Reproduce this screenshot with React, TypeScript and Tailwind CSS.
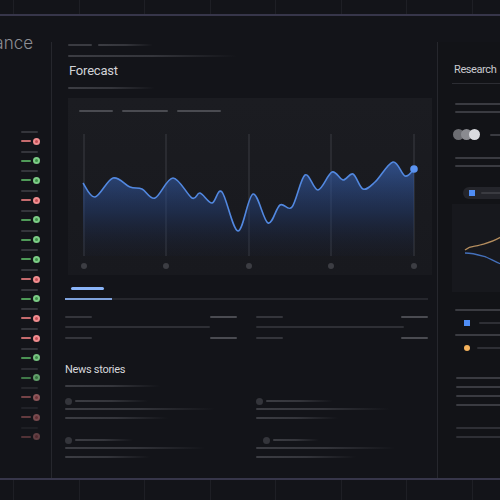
import React from 'react';

const pts: [number, number][] = [
  [83, 183], [95, 197], [113, 178], [130, 187], [142, 189], [155, 198], [173, 178],
  [192, 198], [200, 193], [212, 203], [222, 192], [238, 231], [253, 194], [268, 223],
  [280, 205], [292, 207], [305, 175], [318, 190], [332, 172], [343, 180], [353, 174],
  [363, 189], [375, 182], [393, 162], [405, 176], [414, 169],
];

// catmull-rom -> cubic bezier
function smooth(p: [number, number][]) {
  let d = `M${p[0][0]},${p[0][1]}`;
  for (let i = 0; i < p.length - 1; i++) {
    const p0 = p[i - 1] || p[i];
    const p1 = p[i];
    const p2 = p[i + 1];
    const p3 = p[i + 2] || p2;
    const c1x = p1[0] + (p2[0] - p0[0]) / 6;
    const c1y = p1[1] + (p2[1] - p0[1]) / 6;
    const c2x = p2[0] - (p3[0] - p1[0]) / 6;
    const c2y = p2[1] - (p3[1] - p1[1]) / 6;
    d += ` C${c1x},${c1y} ${c2x},${c2y} ${p2[0]},${p2[1]}`;
  }
  return d;
}

const line = smooth(pts);
const area = `${line} L414,256 L83,256 Z`;

const rows = [
  'r', 'g', 'g', 'r', 'g', 'g', 'g', 'r', 'g', 'r', 'r', 'g', 'g', 'r', 'r', 'r',
];
const fades = [1, 1, 1, 1, 1, 1, 1, 1, 1, 1, 1, 0.95, 0.75, 0.55, 0.45, 0.35];

function Bar({ w, c = 'bg-[#3a3b41]', cls = '' }: { w: number; c?: string; cls?: string }) {
  return <div className={`h-[2px] rounded-full ${c} ${cls}`} style={{ width: w }} />;
}

function Fade({ w, cls = '' }: { w: number; cls?: string }) {
  return (
    <div
      className={`h-[2px] rounded-full bg-gradient-to-r from-[#3c3d43] via-[#34353b] to-transparent ${cls}`}
      style={{ width: w }}
    />
  );
}

function Strip() {
  return (
    <div className="flex h-full pl-[13px]">
      {[0, 1, 2, 3, 4, 5, 6, 7].map((i) => (
        <div key={i} className="h-full w-[65.5px] shrink-0 border-l border-[#1e1f25]" />
      ))}
    </div>
  );
}

function Story({ dotMl = 0, head, l1, l2 }: { dotMl?: number; head: number; l1: number; l2: number }) {
  return (
    <div className="flex flex-col">
      <div className="flex h-[8px] items-center gap-[3px]" style={{ marginLeft: dotMl }}>
        <div className="h-[7px] w-[7px] rounded-full bg-[#34353b]" />
        <Fade w={head} />
      </div>
      <Fade w={l1} cls="mt-[3px]" />
      <Fade w={l2} cls="mt-[7px]" />
    </div>
  );
}

export default function App() {
  return (
    <div className="h-[500px] w-[500px] overflow-hidden bg-[#131419] font-['Roboto','Liberation_Sans',sans-serif]">
      <div className="h-[14px]">
        <Strip />
      </div>
      <div className="h-[2px] bg-[#37364a]" />

      <div className="flex h-[462px]">
        {/* left column */}
        <div className="flex w-[51px] shrink-0 flex-col overflow-hidden">
          <div className="mt-[17px] flex justify-end pr-[18px]">
            <span className="whitespace-nowrap font-['Inter',sans-serif] text-[17px] font-light leading-[20px] text-[#8d8e94]">
              Performance
            </span>
          </div>
          <div className="mt-[76px] flex flex-col">
            {rows.map((r, i) => (
              <div key={i} className="h-[19.73px] pl-[21px] pt-[2px]" style={{ opacity: fades[i] }}>
                <Bar w={17} c="bg-[#34353b]" />
                <div className="mt-[4.5px] flex items-center gap-[1.5px]">
                  <div className={`h-[2px] w-[10px] rounded-full ${r === 'r' ? 'bg-[#c56b6e]' : 'bg-[#4f9a58]'}`} />
                  <div
                    className={`flex h-[7px] w-[7px] items-center justify-center rounded-full ${
                      r === 'r' ? 'bg-[#f08d8f]' : 'bg-[#7ccc86]'
                    }`}
                  >
                    <div className={`h-[3px] w-[3px] rounded-full ${r === 'r' ? 'bg-[#c24e56]' : 'bg-[#3f8f4a]'}`} />
                  </div>
                </div>
              </div>
            ))}
          </div>
        </div>

        {/* middle column */}
        <div className="mt-[26px] flex w-[387px] shrink-0 flex-col border-l border-r border-[#26272d]">
          <div className="ml-[16px] mt-[2px] flex gap-[6px]">
            <Bar w={24} />
            <Fade w={55} />
          </div>
          <Fade w={169} cls="ml-[16px] mt-[9px]" />
          <div className="ml-[17px] mt-[6px] text-[13px] leading-[16px] tracking-[-0.2px] text-[#d2d3d7]">Forecast</div>
          <Fade w={87} cls="ml-[16px] mt-[8px]" />

          <div className="ml-[16px] mt-[9px] h-[177px] w-[364px] bg-gradient-to-b from-[#1b1c21] to-[#18191e]">
            <div className="flex h-[22px] gap-[9px] pl-[11px] pt-[12px]">
              <Bar w={34} c="bg-[#4a4b51]" />
              <Bar w={46} c="bg-[#4a4b51]" />
              <Bar w={44} c="bg-[#4a4b51]" />
            </div>
            <svg width="364" height="155" viewBox="68 120 364 155" className="block">
              <defs>
                <linearGradient id="fill" x1="0" y1="160" x2="0" y2="256" gradientUnits="userSpaceOnUse">
                  <stop offset="0" stopColor="#3d6cc2" stopOpacity="0.65" />
                  <stop offset="0.55" stopColor="#24407a" stopOpacity="0.45" />
                  <stop offset="1" stopColor="#1b2540" stopOpacity="0.1" />
                </linearGradient>
              </defs>
              {[84, 166, 249, 331, 414].map((x) => (
                <g key={x}>
                  <line x1={x} y1={134} x2={x} y2={256} stroke="#3b3c43" strokeWidth="1" />
                  <circle cx={x} cy={266} r="3" fill="#3c3d43" />
                </g>
              ))}
              <path d={area} fill="url(#fill)" />
              <path d={line} fill="none" stroke="#5288e0" strokeWidth="1.6" />
              <circle cx={414} cy={169} r="3.8" fill="#5b93f0" />
            </svg>
          </div>

          <div className="ml-[19px] mt-[12px] h-[3px] w-[33px] rounded-full bg-[#8ab4f8]" />
          <div className="ml-[13px] mt-[8px] flex h-[2px] w-[363px] bg-[#26272d]">
            <div className="h-[2px] w-[47px] bg-[#7fa2dc]" />
          </div>

          <div className="ml-[13px] mt-[16px] flex w-[363px] justify-between">
            <div className="flex w-[172px] flex-col">
              <div className="flex justify-between">
                <Bar w={27} c="bg-[#34353b]" />
                <Bar w={27} c="bg-[#4a4b51]" />
              </div>
              <Bar w={145} c="bg-[#2e2f35]" cls="mt-[8px]" />
              <div className="mt-[9px] flex justify-between">
                <Bar w={27} c="bg-[#34353b]" />
                <Bar w={27} c="bg-[#4a4b51]" />
              </div>
            </div>
            <div className="flex w-[172px] flex-col">
              <div className="flex justify-between">
                <Bar w={27} c="bg-[#34353b]" />
                <Bar w={27} c="bg-[#4a4b51]" />
              </div>
              <Bar w={148} c="bg-[#2e2f35]" cls="mt-[8px]" />
              <div className="mt-[9px] flex justify-between">
                <Bar w={27} c="bg-[#34353b]" />
                <Bar w={27} c="bg-[#4a4b51]" />
              </div>
            </div>
          </div>

          <div className="ml-[13px] mt-[24px] text-[11px] leading-[14px] tracking-[-0.3px] text-[#d6d7db]">News stories</div>
          <Fade w={95} cls="ml-[13px] mt-[8px]" />

          <div className="ml-[13px] mt-[10px] grid w-[363px] grid-cols-2 gap-x-[19px] gap-y-[17px]">
            <Story head={73} l1={150} l2={103} />
            <Story head={67} l1={134} l2={82} />
            <Story head={58} l1={140} l2={85} />
            <Story dotMl={7} head={46} l1={139} l2={100} />
          </div>
        </div>

        {/* right column */}
        <div className="mt-[26px] flex flex-1 flex-col bg-[#121317]">
          <div className="ml-[16px] mt-[21px] whitespace-nowrap text-[11px] leading-[14px] tracking-[-0.4px] text-[#c9cacf]">
            Research
          </div>
          <div className="ml-[14px] mt-[6px] h-px bg-[#2c2d33]" />
          <Bar w={60} cls="ml-[17px] mt-[19px]" />
          <Bar w={60} cls="ml-[17px] mt-[6px]" />
          <div className="ml-[15px] mt-[16px] flex items-center">
            <div className="h-[11px] w-[11px] rounded-full bg-[#6c6d72]" />
            <div className="-ml-[3px] h-[11px] w-[11px] rounded-full bg-[#8a8b90]" />
            <div className="-ml-[3px] h-[11px] w-[11px] rounded-full bg-[#dadbdf]" />
            <Bar w={20} cls="ml-[10px]" />
          </div>
          <Bar w={60} cls="ml-[17px] mt-[17px]" />
          <Bar w={60} cls="ml-[17px] mt-[6px]" />
          <div className="ml-[25px] mt-[20px] flex h-[12px] items-center gap-[6px] rounded-l-full bg-[#24252b] pl-[6px]">
            <div className="h-[6px] w-[6px] bg-[#4f8df5]" />
            <Bar w={30} c="bg-[#3a3b41]" />
          </div>
          <div className="ml-[14px] mt-[5px] h-[88px] bg-[#17181d]">
            <svg width="60" height="88" viewBox="453 205 60 88" className="block">
              <path d="M466,251 C472,246 476,248 481,246 C488,244 494,243 502,238" fill="none" stroke="#b48d5e" strokeWidth="1.3" />
              <path d="M466,254 C474,254 480,256 487,258 C492,260 496,263 502,265" fill="none" stroke="#4470bb" strokeWidth="1.3" />
            </svg>
          </div>
          <Bar w={60} cls="ml-[17px] mt-[17px]" />
          <div className="ml-[26px] mt-[9px] flex items-center gap-[9px]">
            <div className="h-[6px] w-[6px] bg-[#4f8df5]" />
            <Bar w={30} c="bg-[#2e2f35]" />
          </div>
          <Bar w={60} cls="ml-[17px] mt-[8px]" />
          <div className="ml-[26px] mt-[9px] flex items-center gap-[7px]">
            <div className="h-[6px] w-[6px] rounded-full bg-[#f5b25c]" />
            <Bar w={30} c="bg-[#2e2f35]" />
          </div>
          <Bar w={60} cls="ml-[18px] mt-[26px]" />
          <Bar w={60} cls="ml-[18px] mt-[7px]" />
          <Bar w={60} cls="ml-[18px] mt-[7px]" />
          <Bar w={60} cls="ml-[18px] mt-[7px]" />
          <Bar w={60} c="bg-[#2e2f35]" cls="ml-[18px] mt-[21px]" />
          <Bar w={60} c="bg-[#2e2f35]" cls="ml-[18px] mt-[7px]" />
        </div>
      </div>

      <div className="h-[2px] bg-[#37364a]" />
      <div className="h-[20px]">
        <Strip />
      </div>
    </div>
  );
}
